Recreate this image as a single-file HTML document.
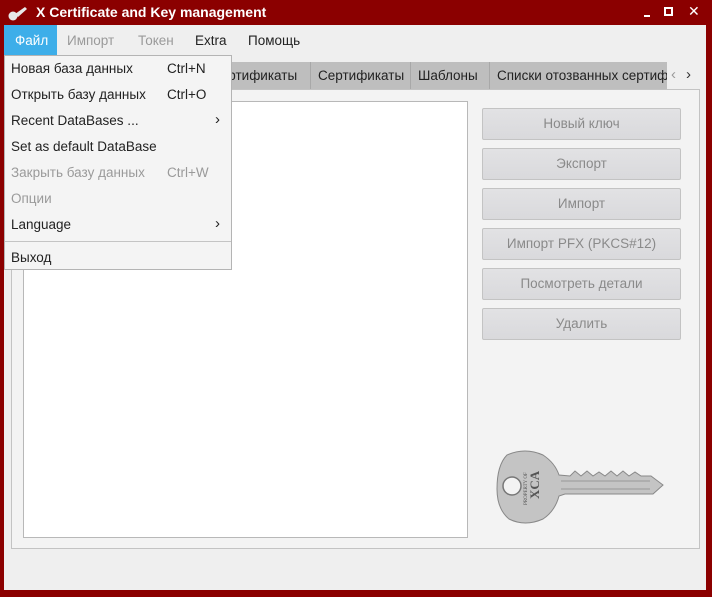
<!DOCTYPE html>
<html><head><style>
*{box-sizing:border-box;margin:0;padding:0}
body{width:712px;height:597px;background:#8b0000;font-family:"Liberation Sans","DejaVu Sans",sans-serif;font-size:13.5px;position:relative;overflow:hidden;color:#222}
.abs{position:absolute}
.title{left:36px;top:4px;color:#fff;font-weight:bold;font-size:14px}
.win{left:4px;top:25px;width:702px;height:565px;background:#efefef}
.tab{top:62px;height:27px;background:#bebebe;border-right:1px solid #a8a8a8;line-height:27px;padding-left:7px}
.panel{left:11px;top:89px;width:689px;height:460px;background:#f3f3f3;border:1px solid #c3c3c3}
.list{left:23px;top:101px;width:445px;height:437px;background:#fff;border:1px solid #b8b8b8}
.btn{left:482px;width:199px;height:32px;background:linear-gradient(#e2e2e4,#d9d9dc);border:1px solid #c3c3c3;border-radius:2px;text-align:center;line-height:30px;color:#8a8a8a}
.menu{left:4px;top:55px;width:228px;height:215px;background:#f4f4f4;border:1px solid #b4b4b4}
.mi{left:11px}
.sc{left:167px}
.dis{color:#9a9a9a}
</style></head><body>
<svg class="abs" style="left:8px;top:5px" width="20" height="16" viewBox="0 0 20 16"><circle cx="5" cy="11" r="4.5" fill="#e8e8e8"/><path d="M7 9 L17 2 L19 4 L10 12Z" fill="#e8e8e8"/></svg>
<div class="abs title">X Certificate and Key management</div>
<div class="abs" style="left:644px;top:15px;width:6px;height:2px;background:#fff"></div>
<div class="abs" style="left:664px;top:7px;width:9px;height:9px;border:2px solid #fff"></div>
<div class="abs" style="left:688px;top:3px;color:#fff;font-size:14px;font-weight:bold">✕</div>
<div class="abs win"></div>
<div class="abs" style="left:4px;top:25px;width:53px;height:30px;background:#3daee9"></div>
<div class="abs" style="left:15px;top:33px;color:#fff">Файл</div>
<div class="abs dis" style="left:67px;top:33px">Импорт</div>
<div class="abs dis" style="left:138px;top:33px">Токен</div>
<div class="abs" style="left:195px;top:33px">Extra</div>
<div class="abs" style="left:248px;top:33px">Помощь</div>
<div class="abs tab" style="left:200px;width:111px;padding-left:11px">Сертификаты</div>
<div class="abs tab" style="left:311px;width:100px">Сертификаты</div>
<div class="abs tab" style="left:411px;width:79px">Шаблоны</div>
<div class="abs tab" style="left:490px;width:177px;border-right:none;overflow:hidden;white-space:nowrap">Списки отозванных сертификатов</div>
<div class="abs" style="left:671px;top:66px;color:#999;font-size:15px">‹</div>
<div class="abs" style="left:686px;top:66px;color:#333;font-size:15px">›</div>
<div class="abs panel"></div>
<div class="abs list"></div>
<div class="abs btn" style="top:108px">Новый ключ</div>
<div class="abs btn" style="top:148px">Экспорт</div>
<div class="abs btn" style="top:188px">Импорт</div>
<div class="abs btn" style="top:228px">Импорт PFX (PKCS#12)</div>
<div class="abs btn" style="top:268px">Посмотреть детали</div>
<div class="abs btn" style="top:308px">Удалить</div>
<svg class="abs" style="left:495px;top:449px" width="170" height="80" viewBox="0 0 170 80">
<path d="M12 6 Q30 -2 48 6 Q60 14 64 26 L75 27 L80 22 L86 27 L92 22 L98 27 L104 23 L110 27 L116 22 L122 27 L128 22 L134 27 L140 23 L146 27 L156 27 L168 36 L158 45 L70 45 L64 47 Q60 62 48 70 Q30 78 14 70 Q2 60 2 40 Q2 16 12 6Z" fill="#c4c4c4" stroke="#888" stroke-width="1"/>
<path d="M66 32 L155 32 M66 40 L155 40" stroke="#999" stroke-width="1"/>
<circle cx="17" cy="37" r="9" fill="#f3f3f3" stroke="#777" stroke-width="1.5"/>
<text x="0" y="0" transform="translate(44,50) rotate(-90)" font-family="Liberation Serif" font-weight="bold" font-size="13" fill="#555">XCA</text>
<text x="0" y="0" transform="translate(32,56) rotate(-90)" font-family="Liberation Serif" font-size="5" fill="#555">PROPERTY OF</text>
</svg>
<div class="abs menu"></div>
<div class="abs mi" style="top:61px">Новая база данных</div><div class="abs sc" style="top:61px">Ctrl+N</div>
<div class="abs mi" style="top:87px">Открыть базу данных</div><div class="abs sc" style="top:87px">Ctrl+O</div>
<div class="abs mi" style="top:113px">Recent DataBases ...</div><div class="abs" style="left:215px;top:111px;font-size:15px">›</div>
<div class="abs mi" style="top:139px">Set as default DataBase</div>
<div class="abs mi dis" style="top:165px">Закрыть базу данных</div><div class="abs sc dis" style="top:165px">Ctrl+W</div>
<div class="abs mi dis" style="top:191px">Опции</div>
<div class="abs mi" style="top:217px">Language</div><div class="abs" style="left:215px;top:215px;font-size:15px">›</div>
<div class="abs" style="left:5px;top:241px;width:226px;height:1px;background:#c4c4c4"></div>
<div class="abs mi" style="top:250px">Выход</div>
</body></html>
